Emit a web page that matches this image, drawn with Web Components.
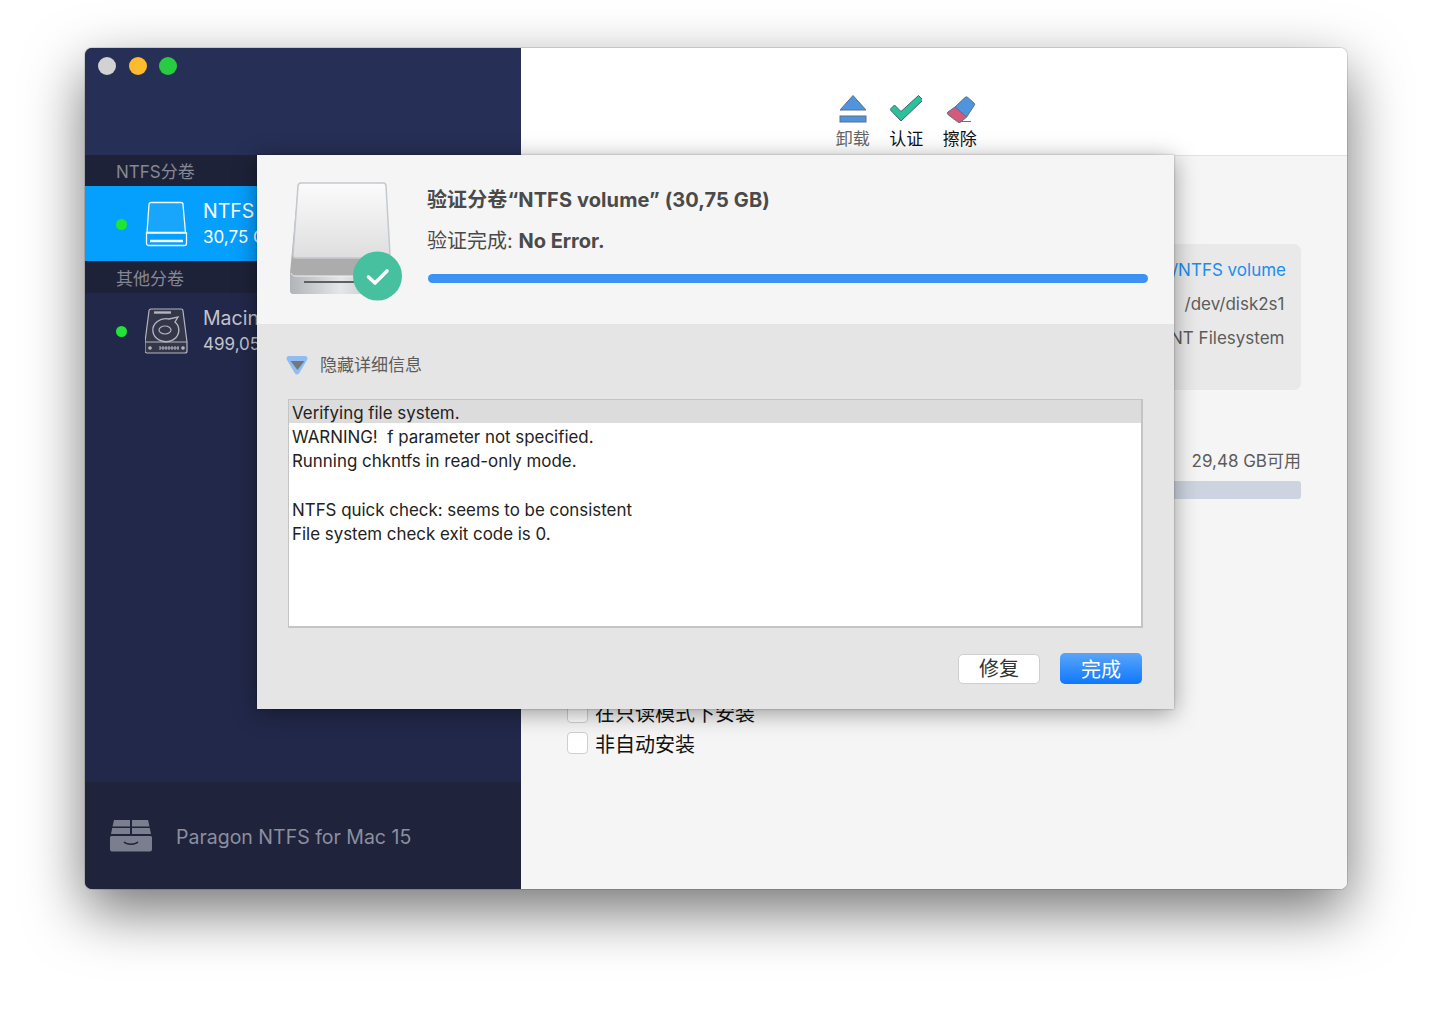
<!DOCTYPE html>
<html lang="zh">
<head>
<meta charset="utf-8">
<title>Paragon NTFS for Mac 15</title>
<style>
    html, body { margin: 0; background: #fff; }
    body {
        width: 1432px;
        height: 1011px;
        overflow: hidden;
        font-family: Inter, "Noto Sans CJK SC", sans-serif;
        color: #333;
    }
</style>
</head>
<body>
<app-window>
    <app-sidebar slot="sidebar">
        <side-header>NTFS分卷</side-header>
        <side-item name="NTFS volume" size="30,75 GB" selected></side-item>
        <side-header style="height:32px">其他分卷</side-header>
        <side-item name="Macintosh HD" size="499,05 GB" kind="hdd"></side-item>
    </app-sidebar>

    <app-toolbar slot="toolbar">
        <tool-button icon="eject" dim>卸载</tool-button>
        <tool-button icon="check">认证</tool-button>
        <tool-button icon="erase">擦除</tool-button>
    </app-toolbar>

    <volume-panel slot="panel"></volume-panel>

    <verify-dialog slot="dialog"></verify-dialog>
</app-window>

<script>
    const FONT = `Inter, "Noto Sans CJK SC", sans-serif`;

    class AppWindow extends HTMLElement {
        constructor() {
            super();
            this.attachShadow({mode: "open"});
            this.shadowRoot.innerHTML = `
                <style>
                    :host {
                        display: flex;
                        position: relative;
                        box-sizing: border-box;
                        width: 1262px;
                        height: 841px;
                        margin: 48px 0 0 85px;
                        border-radius: 7px;
                        overflow: visible;
                        box-shadow: 0 0 0 1px rgba(0,0,0,.12), 0 22px 58px rgba(0,0,0,.55);
                    }
                    .side { flex: 0 0 436px; display: flex; border-radius: 7px 0 0 7px; overflow: hidden; }
                    .main {
                        flex: 1;
                        display: flex;
                        flex-direction: column;
                        border-radius: 0 7px 7px 0;
                        overflow: hidden;
                        background: #f5f5f5;
                    }
                    .dialog { position: absolute; left: 172px; top: 107px; }
                </style>
                <div class="side"><slot name="sidebar"></slot></div>
                <div class="main">
                    <slot name="toolbar"></slot>
                    <slot name="panel"></slot>
                </div>
                <div class="dialog"><slot name="dialog"></slot></div>
            `;
        }
    }

    class AppSidebar extends HTMLElement {
        constructor() {
            super();
            this.attachShadow({mode: "open"});
            this.shadowRoot.innerHTML = `
                <style>
                    :host {
                        display: flex;
                        flex-direction: column;
                        width: 436px;
                        background: #22284a;
                        font-family: ${FONT};
                    }
                    .title {
                        flex: 0 0 107px;
                        box-sizing: border-box;
                        display: flex;
                        gap: 12.500px;
                        padding: 8.500px 0 0 13px;
                        background: #262f55;
                    }
                    .light { width: 18px; height: 18px; border-radius: 50%; }
                    .list { flex: 1; }
                    .foot {
                        flex: 0 0 107px;
                        box-sizing: border-box;
                        display: flex;
                        align-items: center;
                        gap: 24px;
                        padding: 3px 0 0 25px;
                        background: #1f233c;
                        color: #8c8f9e;
                        font-size: 19.500px;
                    }
                    .foot svg { margin-top: -2px; }
                </style>
                <div class="title">
                    <span class="light" style="background:#d2d2d2"></span>
                    <span class="light" style="background:#fdbb2d"></span>
                    <span class="light" style="background:#27cc40"></span>
                </div>
                <div class="list"><slot></slot></div>
                <div class="foot">
                    <svg width="42" height="32" viewBox="0 0 42 32">
                        <g fill="#7b7e8e">
                            <path d="M4 0h16v6.500H2.500zM22 0h16l1.500 6.500H22zM2.200 8H20v6H1zM22 8h17.800L41 14H22z"/>
                            <path d="M0 17a2 2 0 0 1 2-1h38a2 2 0 0 1 2 1v12.500a2 2 0 0 1-2 2H2a2 2 0 0 1-2-2z"/>
                        </g>
                        <path d="M14 22c3 3 11 3 14 0" fill="none" stroke="#1f233c" stroke-width="1.500"/>
                    </svg>
                    <span>Paragon NTFS for Mac 15</span>
                </div>
            `;
        }
    }

    class SideHeader extends HTMLElement {
        constructor() {
            super();
            this.attachShadow({mode: "open"});
            this.shadowRoot.innerHTML = `
                <style>
                    :host {
                        display: flex;
                        align-items: center;
                        box-sizing: border-box;
                        height: 31px;
                        padding-left: 31px;
                        background: #1e2239;
                        color: #858793;
                        font-size: 17px;
                    }
                </style>
                <slot></slot>
            `;
        }
    }

    const DISK_ICONS = {
        ssd: `<svg width="44" height="46" viewBox="0 0 44 46" fill="none" stroke="#f2f9ff" stroke-width="1.300">
                <path d="M6 1.500h30a2 2 0 0 1 2 2l2.500 28H2L4 3.500a2 2 0 0 1 2-2z" fill="#18a6fd"/>
                <path d="M1.500 32h40v10.500a2 2 0 0 1-2 2h-36a2 2 0 0 1-2-2z"/>
                <path d="M5 40h33" stroke-width="2.600"/>
              </svg>`,
        hdd: `<svg width="44" height="46" viewBox="0 0 44 46" fill="none" stroke="#b4b5bd" stroke-width="1.200">
                <path d="M6 1h30a2 2 0 0 1 2 2l4 31v9a2 2 0 0 1-2 2H2a2 2 0 0 1-2-2v-9L4 3a2 2 0 0 1 2-2z" fill="#34374a"/>
                <path d="M0 34h42"/>
                <path d="M9 4.500h17" stroke-width="2.400"/>
                <path d="M33 9l-3 5a13 11.500 0 1 1-6-3z" stroke-width="1.400"/>
                <ellipse cx="20" cy="22" rx="6" ry="4"/>
                <path d="M15 40h19M15 38v4M18 38v4M21 38v4M24 38v4M27 38v4M30 38v4M33 38v4" stroke-width="1"/>
                <circle cx="38" cy="40" r="1.200" fill="#b4b5bd"/>
                <circle cx="5" cy="40" r="1.200" fill="#b4b5bd"/>
              </svg>`,
    };

    class SideItem extends HTMLElement {
        constructor() {
            super();
            this.attachShadow({mode: "open"});
        }

        connectedCallback() {
            const selected = this.hasAttribute("selected");
            const kind = this.getAttribute("kind") || "ssd";
            this.shadowRoot.innerHTML = `
                <style>
                    :host {
                        display: flex;
                        align-items: center;
                        box-sizing: border-box;
                        height: 75px;
                        padding: 2px 0 0 31px;
                        background: ${selected ? "#059ffe" : "transparent"};
                        color: ${selected ? "#fff" : "#c3c4cb"};
                    }
                    .dot { width: 11px; height: 11px; border-radius: 50%; background: #1de733; margin-right: 18px; }
                    svg { display: block; margin-top: -2px; }
                    .text { margin: -2px 0 0 14px; display: flex; flex-direction: column; gap: 1px; white-space: nowrap; }
                    .name { font-size: 19.500px; line-height: 25px; }
                    .size { font-size: 17px; line-height: 24px; }
                </style>
                <span class="dot"></span>
                ${DISK_ICONS[kind]}
                <div class="text">
                    <span class="name">${this.getAttribute("name")}</span>
                    <span class="size">${this.getAttribute("size")}</span>
                </div>
            `;
        }
    }

    class AppToolbar extends HTMLElement {
        constructor() {
            super();
            this.attachShadow({mode: "open"});
            this.shadowRoot.innerHTML = `
                <style>
                    :host {
                        flex: 0 0 108px;
                        display: flex;
                        box-sizing: border-box;
                        height: 108px;
                        padding: 45px 0 0 305px;
                        background: #fff;
                        border-bottom: 1px solid #e2e2e2;
                        font-family: ${FONT};
                    }
                </style>
                <slot></slot>
            `;
        }
    }

    const TOOL_ICONS = {
        eject: `<path d="M14 2.500L1 17h26z" fill="#4f94dc" stroke="#5a7187" stroke-width="1"/>
                <rect x="1" y="23" width="26" height="6" fill="#4f94dc" stroke="#5a7187" stroke-width="1"/>`,
        check: `<path d="M1.500 16.500L6 12l6.500 6.500L30 2.500l4.500 4.500L12.500 28z" transform="translate(-3.500 0)" fill="#2dc09a" stroke="#45616a" stroke-width="1"/>`,
        erase: `<path d="M9 14L19 4.500a2 2 0 0 1 2.800 0L28 10a2 2 0 0 1 0 2.800L20.700 24z" fill="#4f94dc" stroke="#5a7187" stroke-width="1"/>
                <path d="M9 14L20.700 24l-6 5a2 2 0 0 1-2.800 0l-10-7.500a2 2 0 0 1 0-2.500z" fill="#d45a7c" stroke="#5a7187" stroke-width="1"/>
                <path d="M14 28.500h11" stroke="#5a7187" stroke-width="1"/>`,
    };

    class ToolButton extends HTMLElement {
        constructor() {
            super();
            this.attachShadow({mode: "open"});
        }

        connectedCallback() {
            const dim = this.hasAttribute("dim");
            this.shadowRoot.innerHTML = `
                <style>
                    :host {
                        display: flex;
                        flex-direction: column;
                        align-items: center;
                        width: 53.500px;
                        color: ${dim ? "#666" : "#111"};
                        font-size: 17px;
                        line-height: 24px;
                    }
                    svg { display: block; margin-bottom: 4px; }
                </style>
                <svg width="32" height="30" viewBox="-2 0 32 30" fill="none">${TOOL_ICONS[this.getAttribute("icon")]}</svg>
                <slot></slot>
            `;
        }
    }

    class VolumePanel extends HTMLElement {
        constructor() {
            super();
            this.attachShadow({mode: "open"});
            this.shadowRoot.innerHTML = `
                <style>
                    :host {
                        flex: 1;
                        display: flex;
                        flex-direction: column;
                        padding: 88px 46px 0;
                        font-family: ${FONT};
                        color: #5c5c5c;
                    }
                    .card {
                        box-sizing: border-box;
                        height: 146px;
                        padding: 9px 15px;
                        border-radius: 7px;
                        background: #e9e9e9;
                        font-size: 17px;
                        line-height: 34px;
                        text-align: right;
                    }
                    .card a { color: #1b8df0; }
                    .card .plain { margin-right: 1.500px; }
                    .free { margin-top: 59px; text-align: right; font-size: 17px; line-height: 24px; }
                    .bar { height: 17.500px; margin-top: 8px; border-radius: 3px; background: #cdd4df; }
                    .checks { margin-top: 199px; display: flex; flex-direction: column; gap: 2px; }
                </style>
                <div class="card">
                    <div><a>/Volumes/NTFS volume</a></div>
                    <div class="plain">/dev/disk2s1</div>
                    <div class="plain">NT Filesystem</div>
                </div>
                <div class="free">29,48 GB可用</div>
                <div class="bar"></div>
                <div class="checks">
                    <check-row>在只读模式下安装</check-row>
                    <check-row>非自动安装</check-row>
                </div>
            `;
        }
    }

    class CheckRow extends HTMLElement {
        constructor() {
            super();
            this.attachShadow({mode: "open"});
            this.shadowRoot.innerHTML = `
                <style>
                    :host {
                        display: flex;
                        align-items: center;
                        gap: 7px;
                        height: 29px;
                        color: #111;
                        font-size: 20px;
                    }
                    .box {
                        box-sizing: border-box;
                        width: 21px;
                        height: 22px;
                        border: 1px solid #cfcfcf;
                        border-radius: 4px;
                        background: #fff;
                    }
                </style>
                <span class="box"></span>
                <slot></slot>
            `;
        }
    }

    class VerifyDialog extends HTMLElement {
        constructor() {
            super();
            this.attachShadow({mode: "open"});
            this.shadowRoot.innerHTML = `
                <style>
                    :host {
                        display: flex;
                        flex-direction: column;
                        width: 917px;
                        height: 554px;
                        background: #e5e5e5;
                        box-shadow: 0 0 2px rgba(0,0,0,.3), 0 4px 22px rgba(0,0,0,.38);
                        font-family: ${FONT};
                    }
                    .head {
                        flex: 0 0 169px;
                        box-sizing: border-box;
                        display: flex;
                        padding: 27px 26px 0 33px;
                        background: #f5f5f5;
                    }
                    .head svg { display: block; flex: none; }
                    .info { flex: 1; margin-left: 25px; min-width: 0; }
                    .line { color: #4a4a4a; font-size: 20px; line-height: 36px; white-space: nowrap; }
                    .line.top { font-weight: 700; letter-spacing: .1px; }
                    .line.sub { margin-top: 5px; }
                    .line b { font-weight: 700; }
                    .progress { height: 9px; margin: 15px 0 0 1px; border-radius: 5px; background: #3b92f3; }
                    .body { flex: 1; display: flex; flex-direction: column; padding: 29px 31px 0; }
                    .toggle { display: flex; align-items: center; gap: 12px; margin-left: -2px; color: #5b5b5b; font-size: 17px; line-height: 24px; }
                    .log {
                        box-sizing: border-box;
                        height: 229px;
                        margin-top: 22px;
                        border: 1px solid #c4c4c4;
                        border-width: 1px 2px 2px 1px;
                        background: #fff;
                        color: #222;
                        font-size: 16.900px;
                        white-space: pre;
                    }
                    .log div { padding-left: 3px; height: 24.300px; line-height: 29.500px; }
                    .log .current { background: #dcdcdc; height: 23px; line-height: 26px; }
                    .actions { display: flex; justify-content: flex-end; gap: 20px; margin: 25px 1px 0 0; }
                    .btn {
                        box-sizing: border-box;
                        width: 82px;
                        height: 31px;
                        padding-bottom: 1px;
                        display: flex;
                        align-items: center;
                        justify-content: center;
                        border-radius: 5px;
                        font-size: 20px;
                    }
                    .plain { background: #fff; color: #333; border: 1px solid #cfcfcf; height: 30px; margin-top: 1px; padding-bottom: 4px; }
                    .primary { background: linear-gradient(#5aa5f8, #0f78fd); color: #fff; }
                </style>
                <div class="head">
                    <svg width="112" height="120" viewBox="0 0 112 120">
                        <defs>
                            <linearGradient id="top" x1="0" y1="0" x2="0" y2="1">
                                <stop offset="0" stop-color="#fbfbfb"/><stop offset="1" stop-color="#dedede"/>
                            </linearGradient>
                            <linearGradient id="lip" x1="0" y1="0" x2="1" y2="0">
                                <stop offset="0" stop-color="#b0b4b8"/><stop offset=".5" stop-color="#e4e6e8"/><stop offset="1" stop-color="#b6b9bd"/>
                            </linearGradient>
                        </defs>
                        <path d="M11 1h82a3 3 0 0 1 3 3l5 87v17a4 4 0 0 1-4 4H4a4 4 0 0 1-4-4V91L8 4a3 3 0 0 1 3-3z" fill="#acacac"/>
                        <path d="M11 1h82a3 3 0 0 1 3 3l4 69a3 3 0 0 1-3 3H6a3 3 0 0 1-3-3L8 4a3 3 0 0 1 3-3z" fill="url(#top)" stroke="#c3c9cf" stroke-width="1.500"/>
                        <path d="M0 90c0 3 2 4 4 4h92c3 0 5-1 5-4v18a4 4 0 0 1-4 4H4a4 4 0 0 1-4-4z" fill="url(#lip)"/>
                        <path d="M1 91c1 2 2 3 4 3h91c2 0 3-1 4-3" fill="none" stroke="#f1f2f3" stroke-width="1"/>
                        <rect x="14" y="99" width="56" height="2" fill="#5c5f63"/>
                        <circle cx="87.500" cy="94" r="24.500" fill="#47c09f"/>
                        <path d="M78.500 95l6.500 6 12-12" fill="none" stroke="#fff" stroke-width="3.600" stroke-linecap="round" stroke-linejoin="round"/>
                    </svg>
                    <div class="info">
                        <div class="line top">验证分卷“NTFS volume” (30,75 GB)</div>
                        <div class="line sub">验证完成: <b>No Error.</b></div>
                        <div class="progress"></div>
                    </div>
                </div>
                <div class="body">
                    <div class="toggle">
                        <svg width="22" height="21" viewBox="0 0 22 21">
                            <path d="M3 1h16a2.500 2.500 0 0 1 2 4l-8 13.500a2.500 2.500 0 0 1-4 0L1 5a2.500 2.500 0 0 1 2-4z" fill="#8fbdf3"/>
                            <path d="M4.500 6h14L11.500 15z" fill="#74787d"/>
                        </svg>
                        <span>隐藏详细信息</span>
                    </div>
                    <div class="log"><div class="current">Verifying file system.</div><div>WARNING!  f parameter not specified.</div><div>Running chkntfs in read-only mode.</div><div></div><div>NTFS quick check: seems to be consistent</div><div>File system check exit code is 0.</div></div>
                    <div class="actions">
                        <div class="btn plain">修复</div>
                        <div class="btn primary">完成</div>
                    </div>
                </div>
            `;
        }
    }

    customElements.define("app-window", AppWindow);
    customElements.define("app-sidebar", AppSidebar);
    customElements.define("side-header", SideHeader);
    customElements.define("side-item", SideItem);
    customElements.define("app-toolbar", AppToolbar);
    customElements.define("tool-button", ToolButton);
    customElements.define("volume-panel", VolumePanel);
    customElements.define("check-row", CheckRow);
    customElements.define("verify-dialog", VerifyDialog);
</script>
</body>
</html>
